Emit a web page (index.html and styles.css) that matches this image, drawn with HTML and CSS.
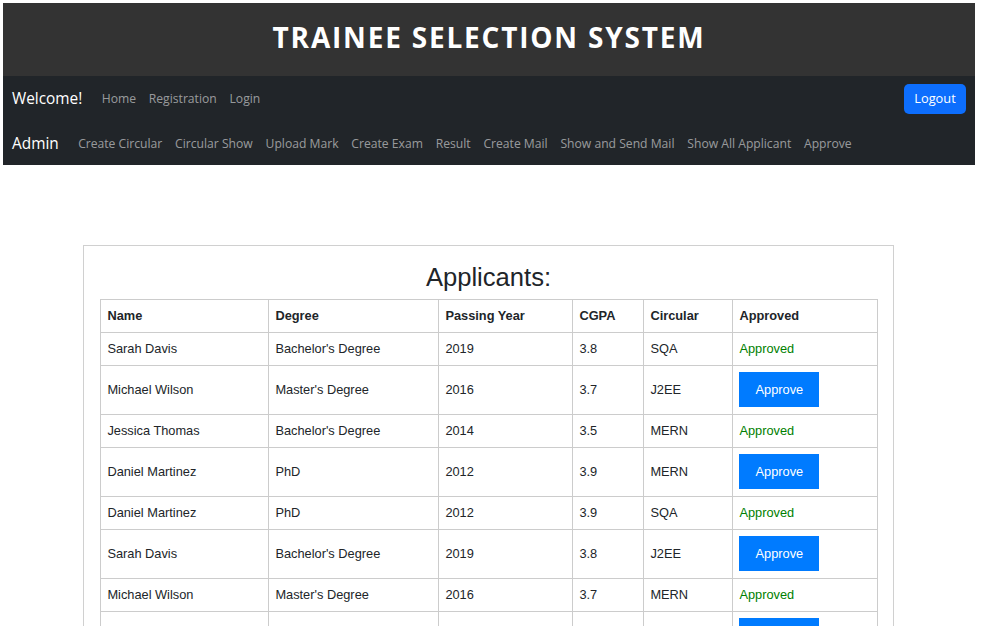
FILE: index.html
```html
<!DOCTYPE html>
<html lang="en">
<head>
<meta charset="utf-8">
<title>Trainee Selection System</title>
<link rel="stylesheet" href="styles.css">
</head>
<body>
<div class="page">
  <header class="site-header">
    <h1 class="site-title">TRAINEE SELECTION SYSTEM</h1>
  </header>
  <nav class="navbar">
    <div class="nav-row">
      <span class="brand">Welcome!</span>
      <a class="nav-link" href="#">Home</a>
      <a class="nav-link" href="#">Registration</a>
      <a class="nav-link" href="#">Login</a>
      <button class="logout">Logout</button>
    </div>
    <div class="nav-row nav-row-admin">
      <span class="brand">Admin</span>
      <a class="nav-link" href="#">Create Circular</a>
      <a class="nav-link" href="#">Circular Show</a>
      <a class="nav-link" href="#">Upload Mark</a>
      <a class="nav-link" href="#">Create Exam</a>
      <a class="nav-link" href="#">Result</a>
      <a class="nav-link" href="#">Create Mail</a>
      <a class="nav-link" href="#">Show and Send Mail</a>
      <a class="nav-link" href="#">Show All Applicant</a>
      <a class="nav-link" href="#">Approve</a>
    </div>
  </nav>
  <main class="content">
    <section class="card">
      <h2 class="card-title">Applicants:</h2>
      <table class="applicants">
        <colgroup>
          <col class="c-name"><col class="c-degree"><col class="c-year"><col class="c-cgpa"><col class="c-circ"><col class="c-appr">
        </colgroup>
        <thead>
          <tr><th>Name</th><th>Degree</th><th>Passing Year</th><th>CGPA</th><th>Circular</th><th>Approved</th></tr>
        </thead>
        <tbody>
          <tr><td>Sarah Davis</td><td>Bachelor's Degree</td><td>2019</td><td>3.8</td><td>SQA</td><td class="ok">Approved</td></tr>
          <tr><td>Michael Wilson</td><td>Master's Degree</td><td>2016</td><td>3.7</td><td>J2EE</td><td class="act"><button class="approve">Approve</button></td></tr>
          <tr><td>Jessica Thomas</td><td>Bachelor's Degree</td><td>2014</td><td>3.5</td><td>MERN</td><td class="ok">Approved</td></tr>
          <tr><td>Daniel Martinez</td><td>PhD</td><td>2012</td><td>3.9</td><td>MERN</td><td class="act"><button class="approve">Approve</button></td></tr>
          <tr><td>Daniel Martinez</td><td>PhD</td><td>2012</td><td>3.9</td><td>SQA</td><td class="ok">Approved</td></tr>
          <tr><td>Sarah Davis</td><td>Bachelor's Degree</td><td>2019</td><td>3.8</td><td>J2EE</td><td class="act"><button class="approve">Approve</button></td></tr>
          <tr><td>Michael Wilson</td><td>Master's Degree</td><td>2016</td><td>3.7</td><td>MERN</td><td class="ok">Approved</td></tr>
          <tr><td>Jessica Thomas</td><td>Bachelor's Degree</td><td>2014</td><td>3.5</td><td>SQA</td><td class="act"><button class="approve">Approve</button></td></tr>
        </tbody>
      </table>
    </section>
  </main>
</div>
</body>
</html>
```
FILE: styles.css
```css
* { box-sizing: border-box; }

body {
  margin: 3px;
  background: #ffffff;
  font-family: "Open Sans", "Noto Sans", sans-serif;
  color: #212529;
}

.page {
  width: 972px;
}

.site-header {
  background: #333333;
  height: 73px;
  padding-bottom: 6px;
  display: flex;
  align-items: center;
  justify-content: center;
}

.site-title {
  margin: 0;
  color: #ffffff;
  font-family: "Open Sans", sans-serif;
  font-weight: 700;
  font-size: 28px;
  letter-spacing: 1.8px;
}

.navbar {
  background: #212529;
  padding: 0 9px;
}

.nav-row {
  display: flex;
  align-items: center;
  height: 45px;
}

.nav-row-admin {
  height: 44px;
}

.brand {
  color: #ffffff;
  font-size: 15.4px;
  margin-right: 13px;
}

.nav-link {
  color: rgba(255, 255, 255, 0.55);
  text-decoration: none;
  font-size: 12.15px;
  padding: 0 6.4px;
}

.logout {
  margin-left: auto;
  width: 62px;
  height: 30px;
  border: none;
  border-radius: 5px;
  background: #0d6efd;
  color: #ffffff;
  font-family: "Open Sans", sans-serif;
  font-size: 12.8px;
  line-height: 28px;
  padding: 0 0 2px;
}

.content {
  padding-top: 80px;
  padding-left: 80px;
  display: flex;
}

.card {
  width: 811px;
  border: 1px solid #d0d0d0;
  padding: 16px 16px 16px;
  font-family: "Liberation Sans", Arial, sans-serif;
}

.card-title {
  margin: 0 0 6px;
  text-align: center;
  font-weight: 400;
  font-size: 25.6px;
  line-height: 1.2;
  color: #212529;
}

.applicants {
  width: 777px;
  border-collapse: collapse;
  table-layout: fixed;
  font-size: 12.8px;
  line-height: 19.2px;
}

.c-name { width: 168px; }
.c-degree { width: 170px; }
.c-year { width: 134px; }
.c-cgpa { width: 71px; }
.c-circ { width: 89px; }
.c-appr { width: 145px; }

.applicants th,
.applicants td {
  border: 1px solid #cccccc;
  padding: 6.4px 6.4px;
  text-align: left;
  vertical-align: middle;
}

.applicants th { font-weight: 700; }

.applicants td.ok { color: #008000; }

.approve {
  display: block;
  width: 80px;
  height: 35.2px;
  border: none;
  border-radius: 0;
  background: #007bff;
  color: #ffffff;
  font-family: "Liberation Sans", Arial, sans-serif;
  font-size: 12.8px;
  padding: 0;
}
```
